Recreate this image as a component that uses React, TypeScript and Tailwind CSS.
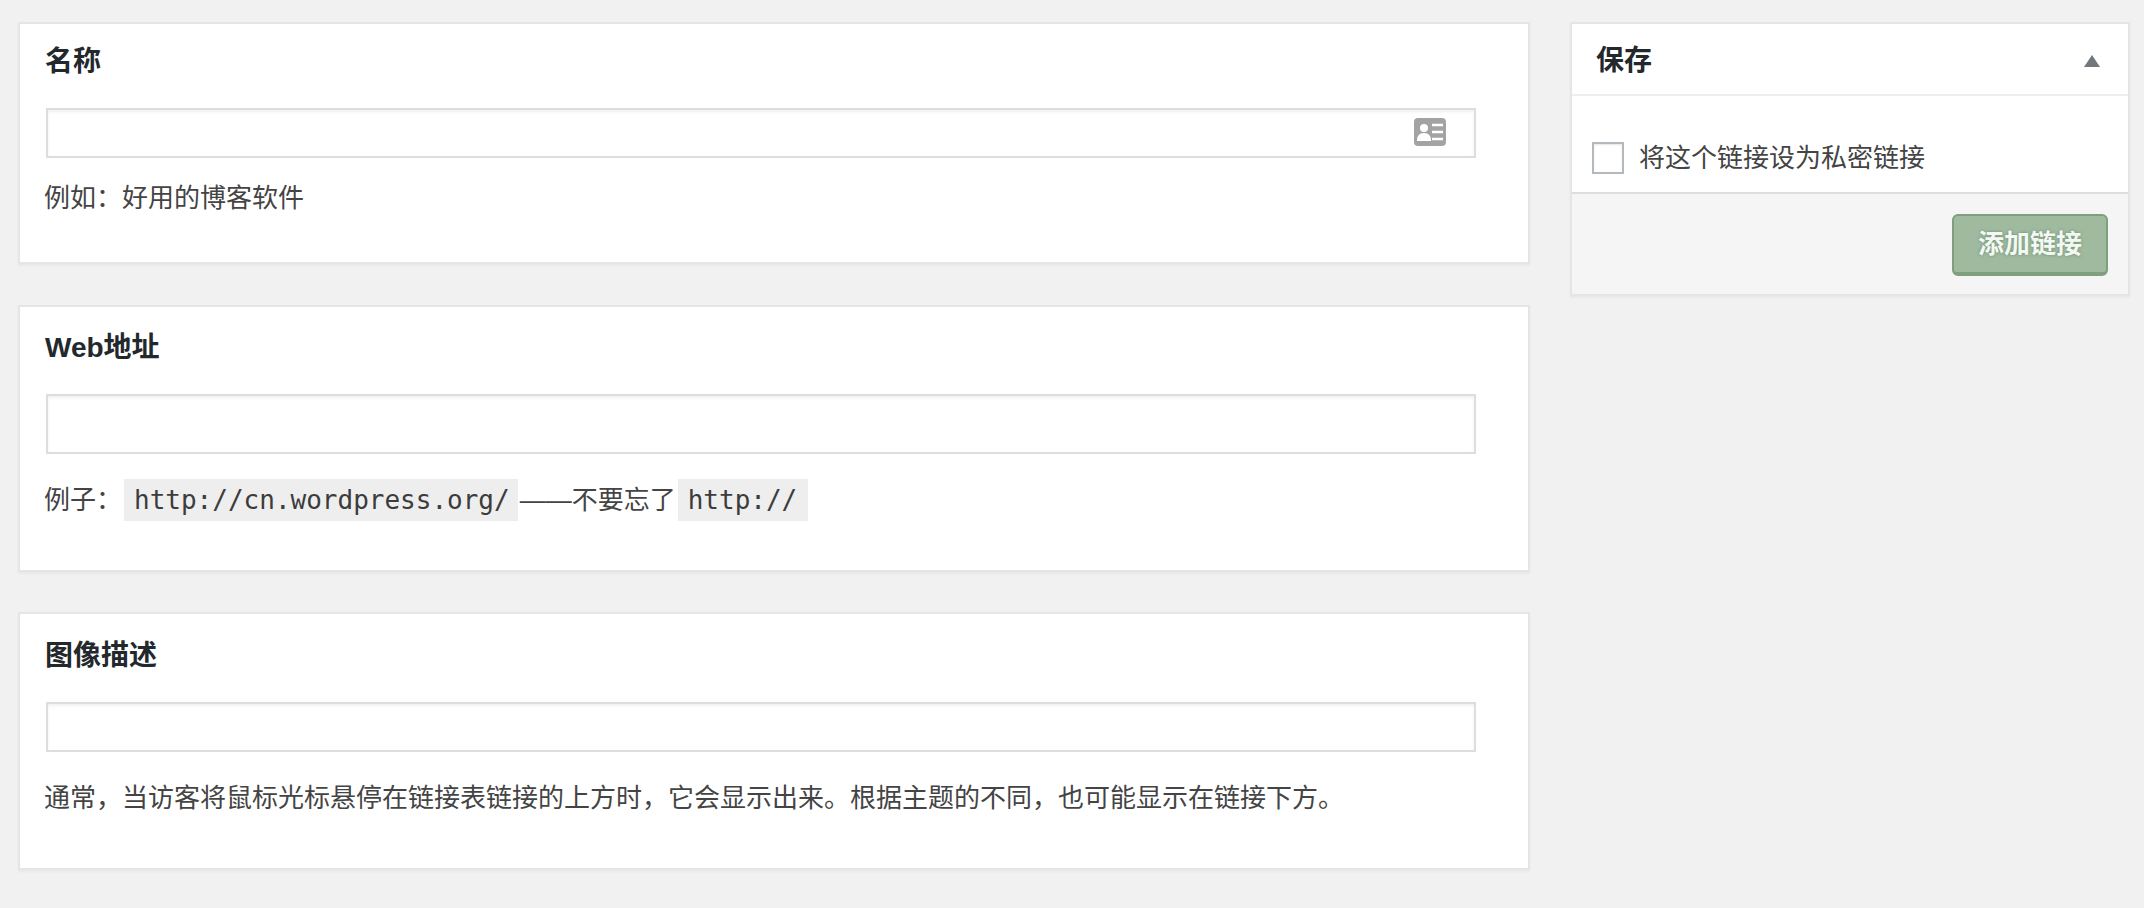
const cjk = "font-['Liberation_Sans','Noto_Sans_CJK_SC',sans-serif]"

function ContactIcon() {
  return (
    <svg className="absolute right-[30px] top-[10px]" width="32" height="28" viewBox="0 0 32 28" fill="none">
      <rect width="32" height="28" rx="4" fill="#a3a3a3" />
      <circle cx="10" cy="10" r="4" fill="#fff" />
      <path d="M3 23c0-5 2-8 7-8s7 3 7 8z" fill="#fff" />
      <path d="M18 7h11M18 14h11M18 21h11" stroke="#fff" strokeWidth="2.5" />
    </svg>
  )
}

function Code({ children, className }: { children: string; className: string }) {
  return (
    <code className={`inline-block h-[42px] bg-[#eeeeee] pl-[10px] font-['DejaVu_Sans_Mono',monospace] text-[26px] leading-[42px] text-[#3c3c3c] ${className}`}>
      {children}
    </code>
  )
}

export default function App() {
  return (
    <div className={`flex h-[908px] items-start gap-[40px] bg-[#f1f1f1] pl-[18px] pt-[22px] ${cjk}`}>
      {/* Left column */}
      <div className="flex w-[1512px] flex-col">
        <section className="h-[242px] border-2 border-[#e5e5e5] bg-white pl-[26px] shadow-[0_2px_2px_rgba(0,0,0,0.04)]">
          <h2 className="-ml-[1px] flex h-[72px] items-center pt-[3px] text-[28px] font-bold text-[#23282d]">名称</h2>
          <div className="relative mt-3 w-[1430px]">
            <input className="block h-[50px] w-full border-2 border-[#dddddd] bg-white shadow-[inset_0_2px_3px_rgba(0,0,0,0.06)]" />
            <ContactIcon />
          </div>
          <p className="-ml-[2px] mt-[22px] text-[26px] leading-9 text-[#444]">例如：好用的博客软件</p>
        </section>

        <section className="mt-[41px] h-[267px] border-2 border-[#e5e5e5] bg-white pl-[26px] shadow-[0_2px_2px_rgba(0,0,0,0.04)]">
          <h2 className="-ml-[1px] flex h-[80px] items-center pt-[1px] text-[28px] font-bold text-[#23282d]">Web地址</h2>
          <input className="mt-[7px] block h-[60px] w-[1430px] border-2 border-[#dddddd] bg-white shadow-[inset_0_2px_3px_rgba(0,0,0,0.06)]" />
          <p className="-ml-[2px] mt-[25px] flex h-[42px] items-center text-[26px] text-[#444]">
            <span className="w-[80px]">例子：</span>
            <Code className="pr-[8px]">http://cn.wordpress.org/</Code>
            <span className="ml-[2px] w-[158px]">——不要忘了</span>
            <Code className="pr-[11px]">http://</Code>
          </p>
        </section>

        <section className="mt-[40px] h-[258px] border-2 border-[#e5e5e5] bg-white pl-[26px] shadow-[0_2px_2px_rgba(0,0,0,0.04)]">
          <h2 className="-ml-[1px] flex h-[82px] items-center pt-[1px] text-[28px] font-bold text-[#23282d]">图像描述</h2>
          <input className="mt-[6px] block h-[50px] w-[1430px] border-2 border-[#dddddd] bg-white shadow-[inset_0_2px_3px_rgba(0,0,0,0.06)]" />
          <p className="-ml-[2px] mt-7 text-[26px] leading-9 text-[#444]">
            通常，当访客将鼠标光标悬停在链接表链接的上方时，它会显示出来。根据主题的不同，也可能显示在链接下方。
          </p>
        </section>
      </div>

      {/* Right column */}
      <aside className="h-[274px] w-[560px] border-2 border-[#e5e5e5] bg-white shadow-[0_2px_2px_rgba(0,0,0,0.04)]">
        <div className="flex h-[72px] items-center justify-between border-b-2 border-[#eeeeee] pl-6 pr-[28px] pt-[3px]">
          <h2 className="text-[28px] font-bold text-[#23282d]">保存</h2>
          <svg width="16" height="12" viewBox="0 0 16 12">
            <path d="M8 0l8 12H0z" fill="#72777c" />
          </svg>
        </div>
        <label className="flex h-[98px] items-end gap-[15px] border-b-2 border-[#dddddd] pb-[18px] pl-[20px]">
          <input type="checkbox" className="h-8 w-8 appearance-none border-2 border-[#b4b9be] bg-white shadow-[inset_0_1px_2px_rgba(0,0,0,0.1)]" />
          <span className="text-[26px] leading-8 text-[#444]">将这个链接设为私密链接</span>
        </label>
        <div className="flex h-[100px] justify-end bg-[#f5f5f5] pr-[20px] pt-5">
          <button className="h-[62px] w-[156px] rounded-[6px] border-2 border-b-4 border-[#7f9f7f] bg-[#9fba9f] text-[26px] font-bold text-[#f4f8f4] [text-shadow:0_0_3px_rgba(70,110,70,0.6)]">
            添加链接
          </button>
        </div>
      </aside>
    </div>
  )
}
